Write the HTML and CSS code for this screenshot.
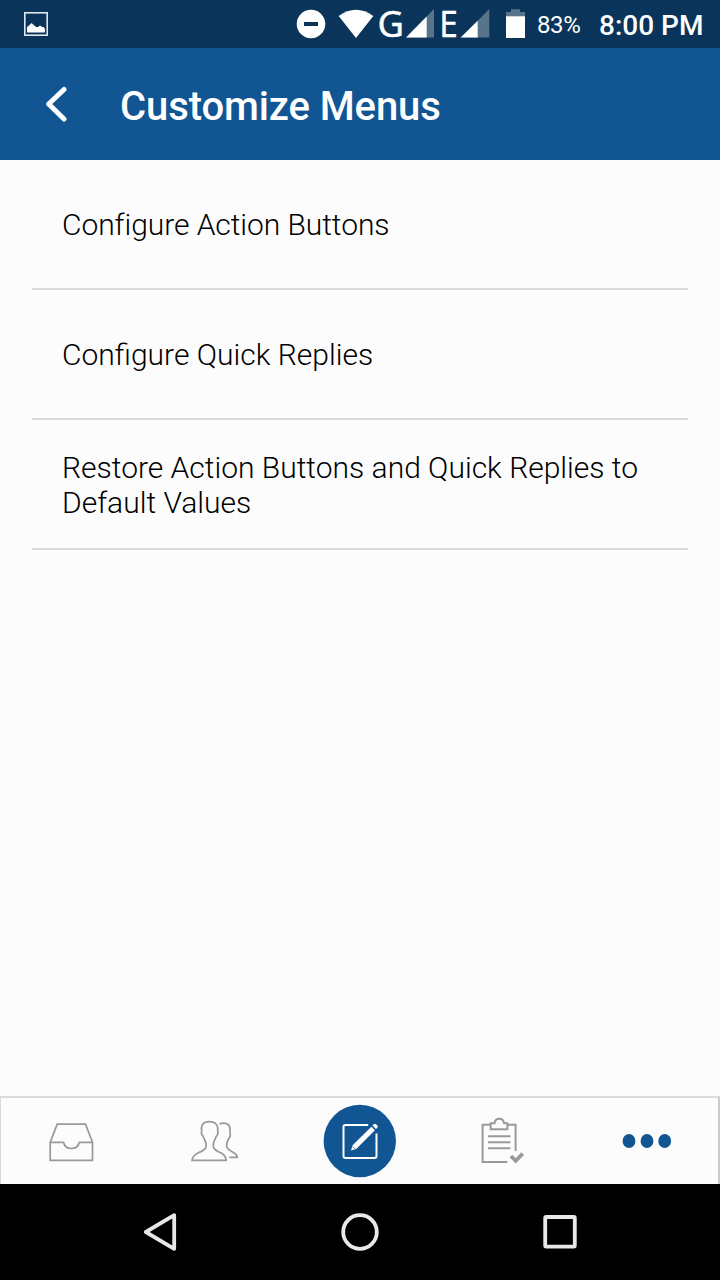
FILE: index.html
```
<!DOCTYPE html>
<html lang="en-us">

<head>
<meta charset="utf-8">
<title>Customize Menus</title>
<meta name="viewport" content="width=device-width, initial-scale=1" />
<link rel="stylesheet" href="styles.css">
</head>

<body>
  <div class="screen">

    <!-- Android status bar -->
    <div class="status-bar">
      <svg class="photo" width="24" height="24" viewBox="0 0 24 24">
        <rect x="0.8" y="0.8" width="22.4" height="22.4" fill="none" stroke="#dfe6ec" stroke-width="1.6" />
        <path fill="#fff" d="M3 20V15.500q0-1 1.500-1.500L7.500 11l4.500 4h2l2-1.500 2 1.500h1.500q1.500 1 1.500 2.500v2q0 1-1 1H4q-1 0-1-.5z" />
      </svg>
      <svg class="icons" width="250" height="48" viewBox="290 0 250 48" fill="#fff">
        <circle cx="311" cy="24" r="14.300" />
        <path fill="#0a345a" d="M304 22h14v4h-14z" />
        <path d="M338.700 16q17.300-12.500 34.600 0L356 38z" />
        <text class="network" x="377.500" y="36.800" textLength="26.500" lengthAdjust="spacingAndGlyphs">G</text>
        <path class="dim" d="M434 9v28.500h-28z" />
        <path d="M426.700 16.500v21H406z" />
        <text class="network" x="439.300" y="36.800" textLength="18.500" lengthAdjust="spacingAndGlyphs">E</text>
        <path class="dim" d="M489.300 9v28.500h-28.500z" />
        <path d="M477.700 20.700v16.800h-17z" />
        <path class="dim" d="M506 12h5V9.300h9V12h5v5h-19z" />
        <path d="M506 16.300h19V38h-19z" />
      </svg>
      <span class="battery">83%</span>
      <span class="clock">8:00 PM</span>
    </div>

    <div class="header">
      <svg class="back" width="24" height="40" viewBox="0 0 24 40">
        <path d="M21 5.500L5.700 20 21 35" />
      </svg>
      <h1>Customize Menus</h1>
    </div>

    <ul class="menu">
      <li>Configure Action Buttons</li>
      <li>Configure Quick Replies</li>
      <li class="two-line">Restore Action Buttons and Quick Replies to Default Values</li>
    </ul>

    <!-- App tabs -->
    <div class="tabs">
      <div class="tab">
        <svg width="60" height="60" viewBox="42.800 1111 60 60">
          <path d="M50 1142.300l7-18.100h28.300l7 18.100v18.100H50zM50 1142.300h13.300q1.400 6.200 7.900 6.200t7.900-6.200h13.200" />
        </svg>
      </div>
      <div class="tab">
        <svg width="60" height="60" viewBox="186.400 1111 60 60">
          <path d="M192.500 1160.400h34c-.2-4-1.500-5.500-4.500-7.200-4-2-8-3-8.300-6.800-.3-4.500.5-5 2.300-8.200.6-1.200.2-2.200 1.500-3 1.500-1.500 1-2.500.6-4.700.8-5.500-2.500-8.900-8.400-8.900s-8.700 3.500-7.600 8.900c-.5 2.200-.8 3.200.6 4.700 1.200.8.9 1.800 1.500 3 1.800 3.200 2.600 3.700 2.300 8.200-.3 3.800-4.500 4.800-8.500 6.800-3.300 1.700-5.200 3.400-5.500 7.200z" />
          <path d="M220 1123.900c5.500-2.300 10.500.3 10.500 5.600 0 3.500-.5 3.500.3 5.500-.3 2-1.200 2.500-1.800 4.200-1.800 3.200-2.300 3.300-2 7 .4 3.300 3.500 4.300 6.500 6 3 1.500 3.800 2.300 4.200 5.100h-8" />
        </svg>
      </div>
      <div class="tab">
        <svg class="compose" width="74" height="74" viewBox="323.500 1104 74 74">
          <circle cx="360.300" cy="1141" r="36.200" />
          <path class="box" d="M368.700 1125H346q-2 0-2 2v29q0 2 2 2h29q2 0 2-2v-22.500" />
          <path class="pencil" d="M351.500 1150.500l1.600-5.200 18.800-18.600 3.500 3.500-18.700 18.700zM373 1125.500l1.200-1.200q1.200-1 2.400 0l1.200 1.200q1.100 1.200 0 2.300l-1.300 1.300z" />
          <path class="tip" d="M353.300 1146.500l2.300 2.300" />
        </svg>
      </div>
      <div class="tab">
        <svg class="tasks" width="60" height="60" viewBox="473.600 1111 60 60">
          <path d="M491 1124.700h-7.800v37.200H508M508.500 1124.700h7.700v26.300M491.300 1123.300h3.700c1-6.200 8.700-6.200 9.700 0h3.300v5.900h-16.700zM488.500 1136.200H511M488.500 1142.200H511M488.500 1148.200H511" />
          <path class="check" d="M511.500 1156l4.800 4.800 7-7.200" />
        </svg>
      </div>
      <div class="tab">
        <svg class="more" width="60" height="60" viewBox="616.200 1111 60 60">
          <ellipse cx="629.200" cy="1141" rx="6.400" ry="6.900" />
          <ellipse cx="647.200" cy="1141" rx="6.400" ry="6.900" />
          <ellipse cx="664.900" cy="1141" rx="6.400" ry="6.900" />
        </svg>
      </div>
    </div>

    <!-- Android navigation -->
    <div class="nav-bar">
      <svg width="40" height="40" viewBox="140 1212 40 40">
        <path d="M145.800 1232l28.400-16.800v33.600z" />
      </svg>
      <svg width="40" height="40" viewBox="340 1212 40 40">
        <circle cx="360" cy="1232" r="16.800" />
      </svg>
      <svg width="40" height="40" viewBox="540 1212 40 40">
        <rect x="545.200" y="1217" width="29.600" height="29.600" rx="1" />
      </svg>
    </div>

  </div>
</body>
</html>
```
FILE: styles.css
```
body {
  margin: 0;
  font-family: Roboto, sans-serif;
}

.screen {
  display: flex;
  flex-direction: column;
  width: 720px;
  height: 1280px;
  background-color: #fcfcfc;
  overflow: hidden;
}

/* Status bar */
.status-bar {
  display: flex;
  align-items: center;
  flex: none;
  height: 48px;
  padding-left: 24px;
  background-color: #0a345a;
  color: #fff;
}
.photo { margin-right: 242px; }
.icons { margin-right: -3px; }
.dim   { fill: #587489; }
.network {
  font-family: "Noto Sans", sans-serif;
  font-size: 37px;
  stroke: #fff;
  stroke-width: 0.4;
}
.battery {
  width: 62px;
  padding-top: 2px;
  font-size: 24px;
  letter-spacing: -0.4px;
  white-space: nowrap;
}
.clock {
  padding-top: 2px;
  font-size: 28px;
  font-weight: 500;
  white-space: nowrap;
}

/* Title bar */
.header {
  display: flex;
  align-items: center;
  flex: none;
  height: 112px;
  padding-left: 43px;
  background-color: #115693;
  color: #fff;
}
.back {
  margin-right: 53px;
  fill: none;
  stroke: #fff;
  stroke-width: 5;
  stroke-linecap: round;
  stroke-linejoin: round;
}
h1 {
  margin: 0;
  padding-top: 4px;
  font-size: 40px;
  font-weight: 500;
  letter-spacing: -0.1px;
}

/* Menu list */
.menu {
  flex: 1;
  margin: 0;
  padding: 0 32px;
  list-style: none;
}
.menu li {
  display: flex;
  align-items: center;
  box-sizing: border-box;
  height: 130px;
  padding: 0 30px;
  border-bottom: 2px solid #dbdbdb;
  color: #000;
  font-size: 30px;
  font-weight: 300;
  line-height: 35px;
}
.menu li:first-child { letter-spacing: -0.06px; }
.menu .two-line { padding-top: 2px; }

/* Tabs */
.tabs {
  display: flex;
  flex: none;
  box-sizing: border-box;
  height: 88px;
  border: solid #dbdbdb;
  border-width: 2px 2px 0 1px;
  border-right-color: #cbcbcb;
}
.tab {
  display: flex;
  flex: 1;
  align-items: center;
  justify-content: center;
}
.tab svg {
  fill: none;
  stroke: #999;
  stroke-width: 1.7;
}
.tab .compose { stroke: none; }
.compose circle { fill: #115693; }
.compose .box {
  stroke: #fff;
  stroke-width: 2;
}
.compose .pencil { fill: #fff; }
.compose .tip {
  stroke: #115693;
  stroke-width: 0.8;
}
.tab .tasks { stroke-width: 2; }
.tasks .check { stroke-width: 3.8; }
.tab .more {
  fill: #115693;
  stroke: none;
}

/* Navigation buttons */
.nav-bar {
  display: flex;
  align-items: center;
  justify-content: space-between;
  flex: none;
  box-sizing: border-box;
  height: 96px;
  padding: 0 140px;
  background-color: #000;
}
.nav-bar svg {
  fill: none;
  stroke: #e8e8e8;
  stroke-width: 3.8;
  stroke-linejoin: round;
}
```
